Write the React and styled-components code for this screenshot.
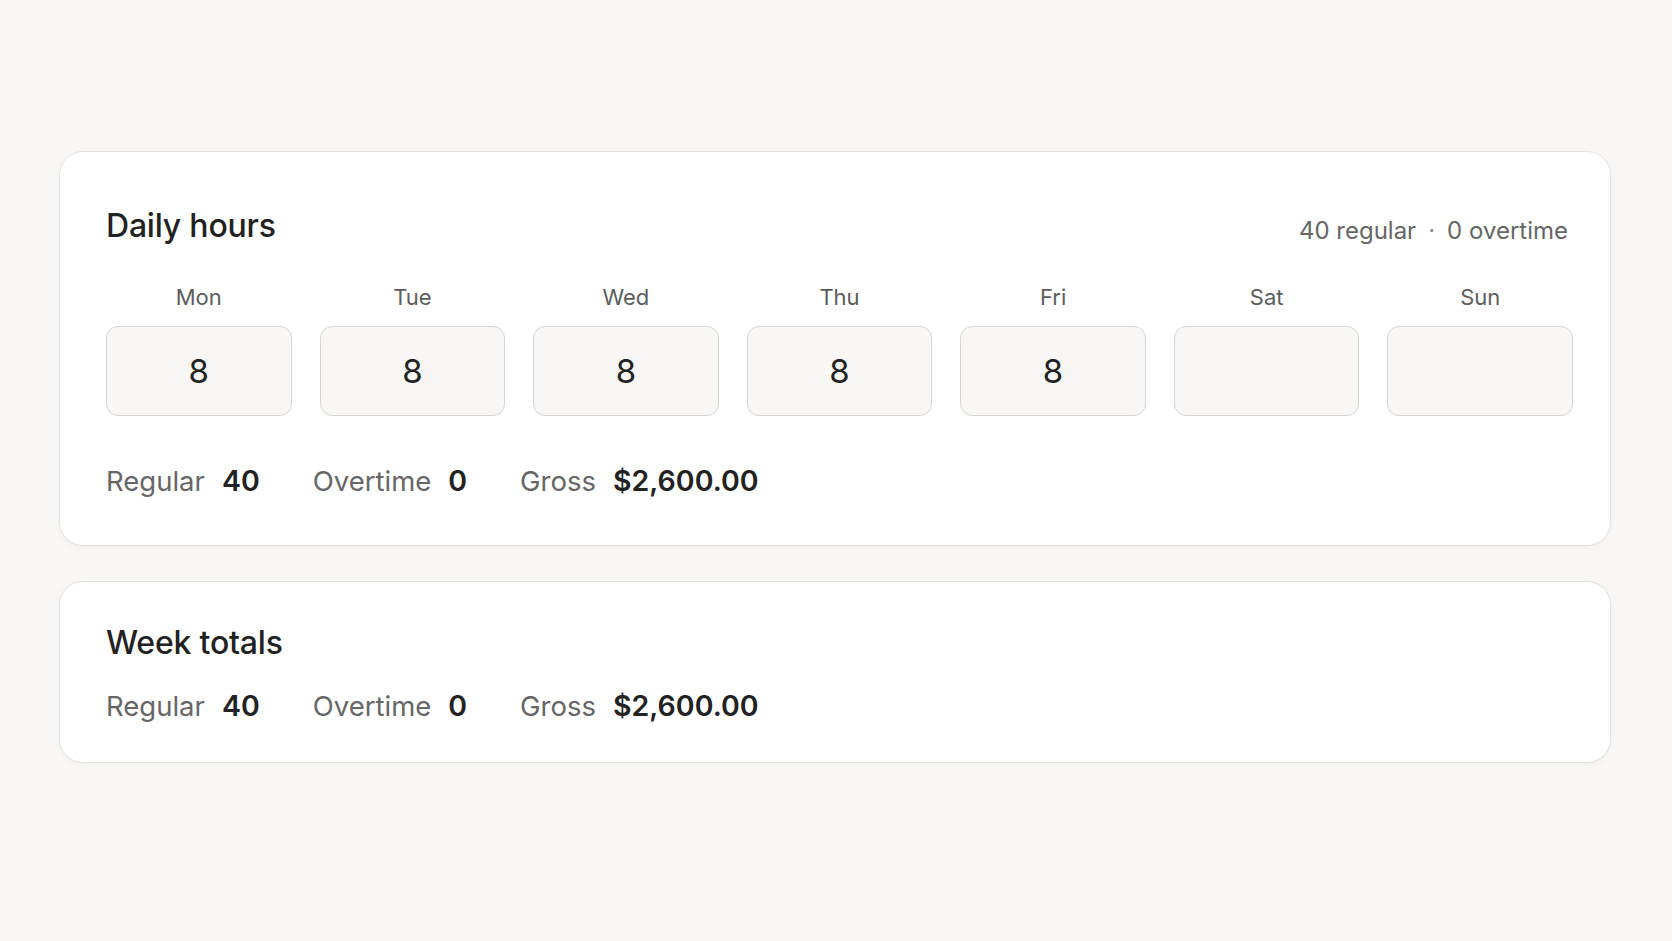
import styled, { createGlobalStyle } from "styled-components";
import { useState } from "react";

const GlobalStyle = createGlobalStyle`
  html, body {
    margin: 0;
    padding: 0;
    background: #f8f7f5;
    font-family: Inter, "Noto Sans", "Liberation Sans", sans-serif;
    color: #222;
  }
  * { box-sizing: border-box; }
`;

const DAYS = ["Mon", "Tue", "Wed", "Thu", "Fri", "Sat", "Sun"];
const RATE = 65;

const App = () => {
  const [hours, setHours] = useState(["8", "8", "8", "8", "8", "", ""]);

  const total = hours.reduce((sum, h) => sum + (parseFloat(h) || 0), 0);
  const regular = Math.min(total, 40);
  const overtime = Math.max(total - 40, 0);
  const gross = regular * RATE + overtime * RATE * 1.5;
  const grossText =
    "$" + gross.toLocaleString("en-US", { minimumFractionDigits: 2, maximumFractionDigits: 2 });

  const setDay = (i, value) => {
    setHours((prev) => prev.map((h, idx) => (idx === i ? value : h)));
  };

  return (
    <Page>
      <GlobalStyle />
      <Card $top={55} $bottom={47}>
        <Header>
          <Title>Daily hours</Title>
          <Summary>
            <span>{regular} regular</span>
            <Dot>·</Dot>
            <span>{overtime} overtime</span>
          </Summary>
        </Header>
        <DayGrid>
          {DAYS.map((day, i) => (
            <DayCol key={day}>
              <DayLabel>{day}</DayLabel>
              <HourInput
                value={hours[i]}
                inputMode="decimal"
                onChange={(e) => setDay(i, e.target.value)}
              />
            </DayCol>
          ))}
        </DayGrid>
        <Stats $mt={48} regular={regular} overtime={overtime} gross={grossText} />
      </Card>

      <Card $top={42} $bottom={38}>
        <Title>Week totals</Title>
        <Stats $mt={27} regular={regular} overtime={overtime} gross={grossText} />
      </Card>
    </Page>
  );
};

const Stats = ({ regular, overtime, gross, $mt }) => (
  <StatRow $mt={$mt}>
    <Stat>
      <StatLabel>Regular</StatLabel>
      <StatValue>{regular}</StatValue>
    </Stat>
    <Stat>
      <StatLabel>Overtime</StatLabel>
      <StatValue>{overtime}</StatValue>
    </Stat>
    <Stat>
      <StatLabel>Gross</StatLabel>
      <StatValue>{gross}</StatValue>
    </Stat>
  </StatRow>
);

export default App;

const Page = styled.main`
  padding: 151px 61px 60px 59px;
  display: flex;
  flex-direction: column;
  gap: 35px;
`;

const Card = styled.section`
  background: #fff;
  border: 1px solid #e4e2de;
  border-radius: 24px;
  box-shadow: 0 2px 6px rgba(0, 0, 0, 0.03);
  padding: ${(p) => p.$top}px 37px ${(p) => p.$bottom}px 46px;
`;

const Header = styled.div`
  display: flex;
  justify-content: space-between;
  align-items: baseline;
`;

const Title = styled.h2`
  margin: 0;
  font-size: 32px;
  line-height: 1.2;
  font-weight: 500;
  color: #222;
  letter-spacing: -0.2px;
`;

const Summary = styled.div`
  display: flex;
  align-items: baseline;
  gap: 12px;
  padding-right: 5px;
  position: relative;
  top: 2px;
  font-size: 24px;
  line-height: 1.2;
  color: #666;
`;

const Dot = styled.span`
  color: #888;
`;

const DayGrid = styled.div`
  margin-top: 39px;
  display: grid;
  grid-template-columns: repeat(7, 1fr);
  gap: 28px;
`;

const DayCol = styled.div`
  display: flex;
  flex-direction: column;
  align-items: stretch;
  gap: 15px;
`;

const DayLabel = styled.div`
  text-align: center;
  font-size: 22px;
  line-height: 1.2;
  color: #5c5c5c;
`;

const HourInput = styled.input`
  width: 100%;
  height: 90px;
  border: 1.5px solid #d8d6d2;
  border-radius: 12px;
  background: #f8f7f5;
  text-align: center;
  font-family: inherit;
  font-size: 33px;
  color: #222;
  outline: none;
  padding: 0;

  &:focus {
    border-color: #b8b5b0;
  }
`;

const StatRow = styled.div`
  margin-top: ${(p) => p.$mt}px;
  display: flex;
  gap: 53px;
  font-size: 27.5px;
  line-height: 1.2;
`;

const Stat = styled.div`
  display: flex;
  align-items: baseline;
  gap: 17px;
`;

const StatLabel = styled.span`
  color: #666;
`;

const StatValue = styled.span`
  color: #222;
  font-weight: 600;
  font-size: 28.5px;
`;
